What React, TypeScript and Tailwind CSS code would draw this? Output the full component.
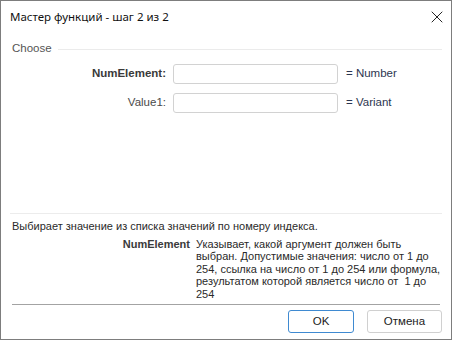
import { X } from 'lucide-react';

const font = { fontFamily: '"Liberation Sans", Arial, sans-serif' };

function ParamRow({ label, bold, type }: { label: string; bold?: boolean; type: string }) {
  return (
    <div className="flex items-center h-[20px]">
      <div className={`w-[172px] pr-[7px] text-right text-[11.5px] ${bold ? 'font-bold text-[#3a3a3a]' : 'text-[#4a4a4a]'}`}>
        {label}
      </div>
      <div className="w-[165px] h-[20px] border border-[#d2d2d2] rounded-[3px] bg-white" />
      <div className="pl-[8px] text-[11.5px] text-[#2c3650]">= {type}</div>
    </div>
  );
}

export default function App() {
  return (
    <div className="w-[452px] h-[340px] bg-white border border-[#7d7d7d] flex flex-col" style={font}>
      {/* title bar */}
      <div className="h-[31px] flex items-center justify-between pl-[9px] pr-[4px] shrink-0">
        <span className="text-[11.5px] text-[#111]" style={{ fontFamily: '"Noto Sans", "Open Sans", sans-serif' }}>
          Мастер функций - шаг 2 из 2
        </span>
        <X size={20} strokeWidth={1.1} className="text-[#111]" />
      </div>

      {/* group */}
      <div className="flex items-center mt-[9px] h-[16px] pl-[11px] pr-[9px]">
        <span className="text-[11.5px] text-[#555]">Choose</span>
        <div className="flex-1 h-px bg-[#ebebeb] ml-[6px]" />
      </div>

      <div className="flex flex-col gap-[9px] mt-[7px]">
        <ParamRow label="NumElement:" bold type="Number" />
        <ParamRow label="Value1:" type="Variant" />
      </div>

      <div className="flex-1" />

      {/* description */}
      <div className="mx-[9px] h-px bg-[#ececec]" />
      <div className="pl-[11px] mt-[5px] text-[11px] text-[#2a2a2a] leading-[14px]">
        Выбирает значение из списка значений по номеру индекса.
      </div>
      <div className="flex mt-[5px] text-[11px] text-[#2a2a2a] leading-[12.5px]">
        <div className="w-[189px] text-right font-bold text-[#3a3a3a]">NumElement</div>
        <div className="pl-[6px]">
          Указывает, какой аргумент должен быть
          <br />
          выбран. Допустимые значения: число от 1 до
          <br />
          254, ссылка на число от 1 до 254 или формула,
          <br />
          результатом которой является число от &nbsp;1 до
          <br />
          254
        </div>
      </div>

      <div className="mx-[11px] mt-[4px] h-px bg-[#a3a3a3]" />

      {/* buttons */}
      <div className="flex justify-end gap-[13px] pr-[9px] mt-[5px] mb-[6px]">
        <button className="w-[66px] h-[23px] border border-[#3f8ad1] rounded-[3px] bg-white text-[11.5px] text-[#222]">
          OK
        </button>
        <button className="w-[75px] h-[23px] border border-[#d0d0d0] rounded-[3px] bg-white text-[11.5px] text-[#222]">
          Отмена
        </button>
      </div>
    </div>
  );
}
